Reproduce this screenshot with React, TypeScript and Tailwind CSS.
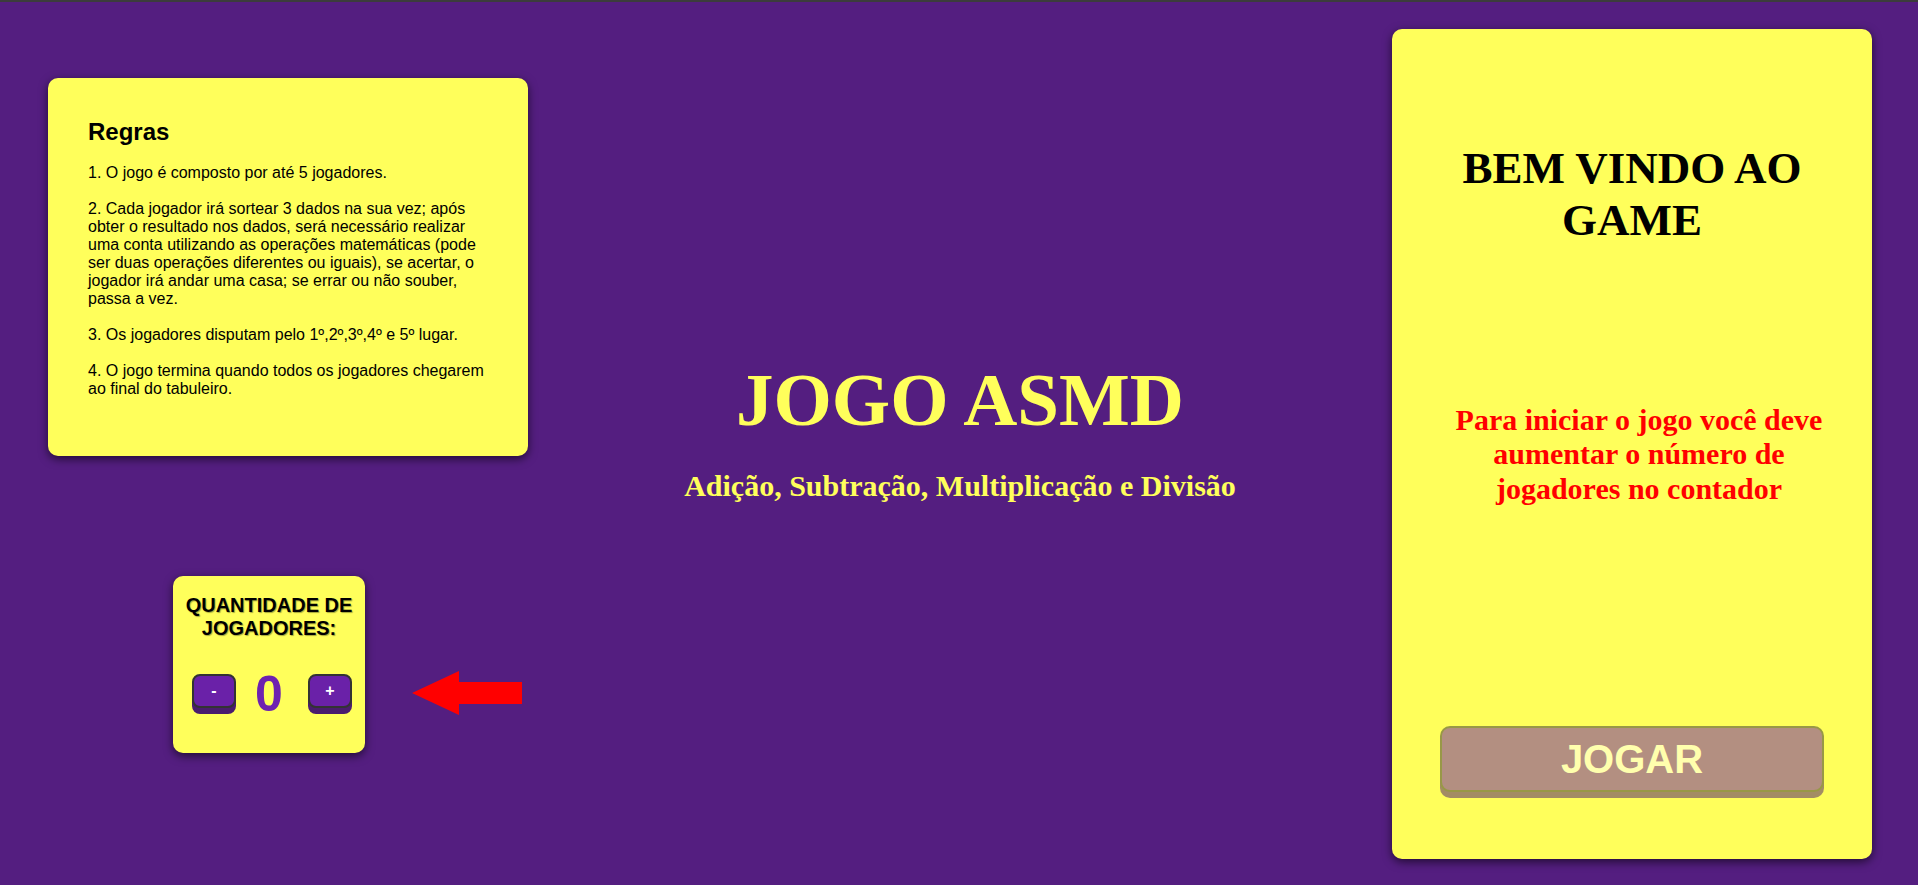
import { useState } from "react";

const serif = "font-['Liberation_Serif','Times_New_Roman',serif]";
const sans = "font-['Liberation_Sans',Arial,sans-serif]";

function RulesCard() {
  return (
    <div className={`w-[480px] h-[378px] rounded-[10px] bg-[#ffff5b] px-[40px] pt-[40px] text-black shadow-[0_3px_10px_rgba(0,0,0,0.6)] ${sans}`}>
      <h2 className="text-[24px] font-bold leading-[27.6px] mb-[18px]">Regras</h2>
      <div className="text-[16px] leading-[18px] space-y-[18px]">
        <p>1. O jogo é composto por até 5 jogadores.</p>
        <p>
          2. Cada jogador irá sortear 3 dados na sua vez; após obter o resultado nos dados, será
          necessário realizar uma conta utilizando as operações matemáticas (pode ser duas operações
          diferentes ou iguais), se acertar, o jogador irá andar uma casa; se errar ou não souber,
          passa a vez.
        </p>
        <p>3. Os jogadores disputam pelo 1º,2º,3º,4º e 5º lugar.</p>
        <p>4. O jogo termina quando todos os jogadores chegarem ao final do tabuleiro.</p>
      </div>
    </div>
  );
}

function Counter({ count, setCount }: { count: number; setCount: (n: number) => void }) {
  const btn =
    "w-[44px] h-[34px] shrink-0 rounded-[8px] border-2 border-[#333] bg-[#6a21a8] text-white text-[16px] font-bold shadow-[0_6px_0_#4a1c6e] flex items-center justify-center";
  return (
    <div className={`w-[192px] h-[177px] rounded-[10px] bg-[#ffff5b] pt-[18px] shadow-[0_3px_10px_rgba(0,0,0,0.6)] ${sans}`}>
      <p className="text-center text-[20px] font-bold leading-[23px] text-black [text-shadow:1px_1px_1px_rgba(0,0,0,0.35)]">
        QUANTIDADE DE
        <br />
        JOGADORES:
      </p>
      <div className="mt-[34px] pl-[19px] flex items-center">
        <button className={btn} onClick={() => setCount(Math.max(0, count - 1))}>
          -
        </button>
        <span className="ml-[19px] mr-[25px] w-[28px] text-center text-[50px] font-bold leading-[34px] text-[#6e22b0] translate-y-[3px]">
          {count}
        </span>
        <button className={btn} onClick={() => setCount(Math.min(5, count + 1))}>
          +
        </button>
      </div>
    </div>
  );
}

function Arrow() {
  return (
    <svg width="110" height="44" viewBox="0 0 110 44" className="mt-[95px] ml-[47px]">
      <polygon points="0,22 47,0 47,11 110,11 110,33 47,33 47,44" fill="#ff0000" />
    </svg>
  );
}

export default function App() {
  const [count, setCount] = useState(0);

  return (
    <div className="min-h-screen h-[885px] bg-[#541e80] border-t-2 border-[#3c3c3c] flex overflow-hidden">
      {/* left column */}
      <div className="ml-[48px] pt-[76px] w-[480px] shrink-0">
        <RulesCard />
        <div className="mt-[120px] ml-[125px] flex items-start">
          <Counter count={count} setCount={setCount} />
          <Arrow />
        </div>
      </div>

      {/* center */}
      <div className={`flex-1 flex flex-col items-center pt-[354px] text-[#ffff5b] font-bold ${serif}`}>
        <h1 className="text-[75px] leading-[87px]">JOGO ASMD</h1>
        <p className="mt-[26px] text-[30px] leading-[34.5px]">Adição, Subtração, Multiplicação e Divisão</p>
      </div>

      {/* right card */}
      <div className="mr-[46px] mt-[27px] w-[480px] h-[830px] shrink-0 rounded-[10px] bg-[#ffff5b] shadow-[0_3px_10px_rgba(0,0,0,0.6)] flex flex-col items-center pt-[114px]">
        <h1 className={`w-[400px] text-center text-[45px] font-bold leading-[51.75px] text-black ${serif}`}>
          BEM VINDO AO GAME
        </h1>
        <p className={`mt-[156px] w-[480px] pl-[54px] pr-[40px] text-center text-[30px] font-bold leading-[34.5px] text-[#ff0000] ${serif}`}>
          Para iniciar o jogo você deve aumentar o número de jogadores no contador
        </p>
        <button
          disabled={count === 0}
          className={`mt-[220px] w-[384px] h-[66px] rounded-[10px] border-2 border-[#333] bg-[#6a21a8] text-white text-[40px] font-bold shadow-[0_6px_0_#4a1c6e] disabled:opacity-50 ${sans}`}
        >
          JOGAR
        </button>
      </div>
    </div>
  );
}
